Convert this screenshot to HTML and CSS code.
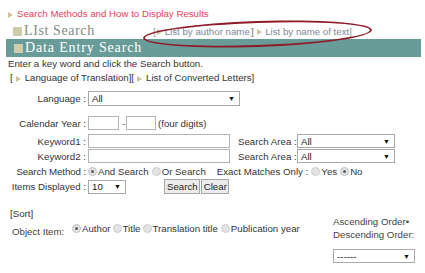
FILE: index.html
```html
<!DOCTYPE html>
<html>
<head>
<meta charset="utf-8">
<link rel="stylesheet" href="styles.css">
</head>
<body>
<div class="page">
  <div class="crumb"><span class="tri"></span><span class="red">Search Methods and How to Display Results</span></div>
  <div class="listrow">
    <div class="h2"><span class="sq"></span>LIst Search</div>
    <div class="links">
      <span class="br">[</span><span class="tri"></span><span>List by author name</span><span class="br mid">][</span><span class="tri"></span><span>List by name of text</span><span class="br">]</span>
    </div>
  </div>
  <div class="bar"><span class="sq"></span>Data Entry Search</div>
  <div class="intro">Enter a key word and click the Search button.</div>
  <div class="sublinks">[<span class="tri"></span>Language of Translation][<span class="tri"></span>List of Converted Letters]</div>

  <div class="form">
    <div class="row r-lang">
      <div class="lab">Language :</div>
      <div class="sel w-lang"><span>All</span><span class="arr">▼</span></div>
    </div>
    <div class="row r-year">
      <div class="lab">Calendar Year :</div>
      <div class="inp w-y1"></div><span class="dash">-</span><div class="inp w-y2"></div><span class="note">(four digits)</span>
    </div>
    <div class="row r-kw">
      <div class="lab">Keyword1 :</div>
      <div class="inp w-kw"></div>
      <div class="lab2">Search Area :</div>
      <div class="sel w-area"><span>All</span><span class="arr">▼</span></div>
    </div>
    <div class="row r-kw r-kw2">
      <div class="lab">Keyword2 :</div>
      <div class="inp w-kw"></div>
      <div class="lab2">Search Area :</div>
      <div class="sel w-area"><span>All</span><span class="arr">▼</span></div>
    </div>
    <div class="row r-meth">
      <div class="lab lab-meth">Search Method :</div>
      <span class="radio on"></span><span>And Search</span><span class="radio"></span><span>Or Search</span>
      <span class="exact">Exact Matches Only :</span><span class="radio"></span><span>Yes</span><span class="radio on"></span><span>No</span>
    </div>
    <div class="row r-items">
      <div class="lab">Items Displayed :</div>
      <div class="sel w-items"><span>10</span><span class="arr">▼</span></div>
      <div class="btns"><span class="btn">Search</span><span class="btn">Clear</span></div>
    </div>
  </div>

  <div class="sort">[Sort]</div>
  <div class="sortrow">
    <div class="oi">Object Item:</div>
    <div class="opts">
      <span class="radio on"></span><span>Author</span><span class="radio"></span><span>Title</span><span class="radio"></span><span>Translation title</span><span class="radio pub"></span><span>Publication year</span>
    </div>
    <div class="order">
      <div class="ol">Ascending Order•</div>
      <div class="ol">Descending Order:</div>
      <div class="sel w-order"><span>------</span><span class="arr">▼</span></div>
    </div>
  </div>

  <div class="ellipse"></div>
</div>
</body>
</html>
```
FILE: styles.css
```css
* { box-sizing: border-box; }
html, body { margin: 0; padding: 0; background: #fff; }
body { font-family: "Liberation Sans", Arial, sans-serif; font-size: 9.7px; color: #333; width: 425px; height: 273px; overflow: hidden; }
.page { position: relative; padding: 0; }
.tri { display: inline-block; width: 0; height: 0; border-top: 3px solid transparent; border-bottom: 3px solid transparent; border-left: 5px solid #cbc49e; }

.crumb { height: 20px; padding: 7px 0 0 8px; line-height: 13px; display: flex; align-items: center; }
.crumb .tri { margin-right: 4px; margin-top: 3px; }
.red { color: #e3435c; line-height: 13px; }

.listrow { display: flex; align-items: center; height: 19px; padding: 3px 0 0 13px; }
.h2 { font-family: "Liberation Serif", serif; font-size: 14px; letter-spacing: 0.6px; color: #7f8b87; display: flex; align-items: center; width: 140px; }
.sq { display: inline-block; width: 9px; height: 9px; background: #cfcca9; margin-right: 2px; flex: none; }
.links { color: #7d8895; display: flex; align-items: center; }
.links .br { color: #9a9a9a; }
.links .tri { margin: 1px 3px 0 1px; }
.links .mid { letter-spacing: -2px; margin-right: 4px; margin-left: 1px; }

.bar { background: #689c99; color: #fff; height: 18px; margin-left: 6px; width: 415px; display: flex; align-items: center; padding-left: 8px; font-family: "Liberation Serif", serif; font-size: 14px; letter-spacing: 0.85px; }
.bar .sq { margin-right: 2px; }

.intro { line-height: 14px; padding-left: 8px; }
.sublinks { line-height: 14px; padding-left: 10px; display: flex; align-items: center; }
.sublinks .tri { margin: 1px 4px 0 3px; }

.form { margin-top: 6px; }
.row { display: flex; align-items: center; }
.lab { width: 88px; flex: none; text-align: right; padding-right: 2px; color: #333; }
.lab-meth { letter-spacing: -0.1px; }
.r-lang { height: 15px; }
.r-year { height: 14px; margin-top: 10px; }
.r-kw { height: 14px; margin-top: 4px; }
.r-kw2 { margin-top: 1px; }
.r-meth { height: 16px; }
.r-items { height: 15px; }

.sel { height: 100%; border: 1px solid #a9a9a9; display: flex; align-items: center; justify-content: space-between; padding: 0 4px 0 3px; background: #fff; color: #222; flex: none; }
.arr { font-size: 7px; color: #111; }
.inp { height: 100%; border: 1px solid #b4b4b4; background: #fff; flex: none; }
.w-lang { width: 152px; }
.w-y1 { width: 31px; }
.w-y2 { width: 30px; }
.w-kw { width: 142px; }
.w-area { width: 98px; }
.w-items { width: 38px; height: 14px; }
.w-order { width: 82px; height: 14px; }
.dash { margin: 0 2px 0 3px; color: #555; width: 2px; }
.note { margin-left: 2px; }
.lab2 { margin-left: 8px; width: 59px; flex: none; }

.radio { display: inline-block; width: 9px; height: 9px; border-radius: 50%; border: 1px solid #cdcdcd; background: #e3e3e3; margin: 0 1px 0 3px; position: relative; flex: none; }
.row > .radio:nth-child(2) { margin-left: 0; }
.radio.on { background: #e6e6e6; border-color: #bdbdbd; }
.radio.on::after { content: ""; position: absolute; left: 2px; top: 2px; width: 3px; height: 3px; border-radius: 50%; background: #5a5a5a; }
.exact { margin-left: 11px; margin-right: 0; }

.btns { display: flex; gap: 1px; margin-left: 38px; height: 15px; }
.btn { border: 1px solid #a5a5a5; background: #ececec; height: 15px; padding: 0 1px 0 2px; display: flex; align-items: center; color: #222; }

.sort { margin-top: 14px; padding-left: 10px; line-height: 12px; height: 12px; }
.sortrow { display: flex; margin-top: -5px; }
.oi { padding-left: 12px; width: 72px; flex: none; line-height: 13px; padding-top: 10px; color: #444; }
.opts { display: flex; align-items: center; height: 13px; margin-top: 7px; width: 261px; flex: none; }
.opts .radio { margin-left: 2px; }
.opts .radio:first-child { margin-left: 0; }
.opts .radio.pub { margin-left: 3px; }
.order { display: flex; flex-direction: column; color: #444; }
.ol { line-height: 13px; }
.order .sel { margin-top: 8px; }

.ellipse { position: absolute; left: 143px; top: 21px; width: 229px; height: 26px; border: 2px solid #8e1b27; border-radius: 50%; transform: rotate(-2deg); pointer-events: none; }
```
